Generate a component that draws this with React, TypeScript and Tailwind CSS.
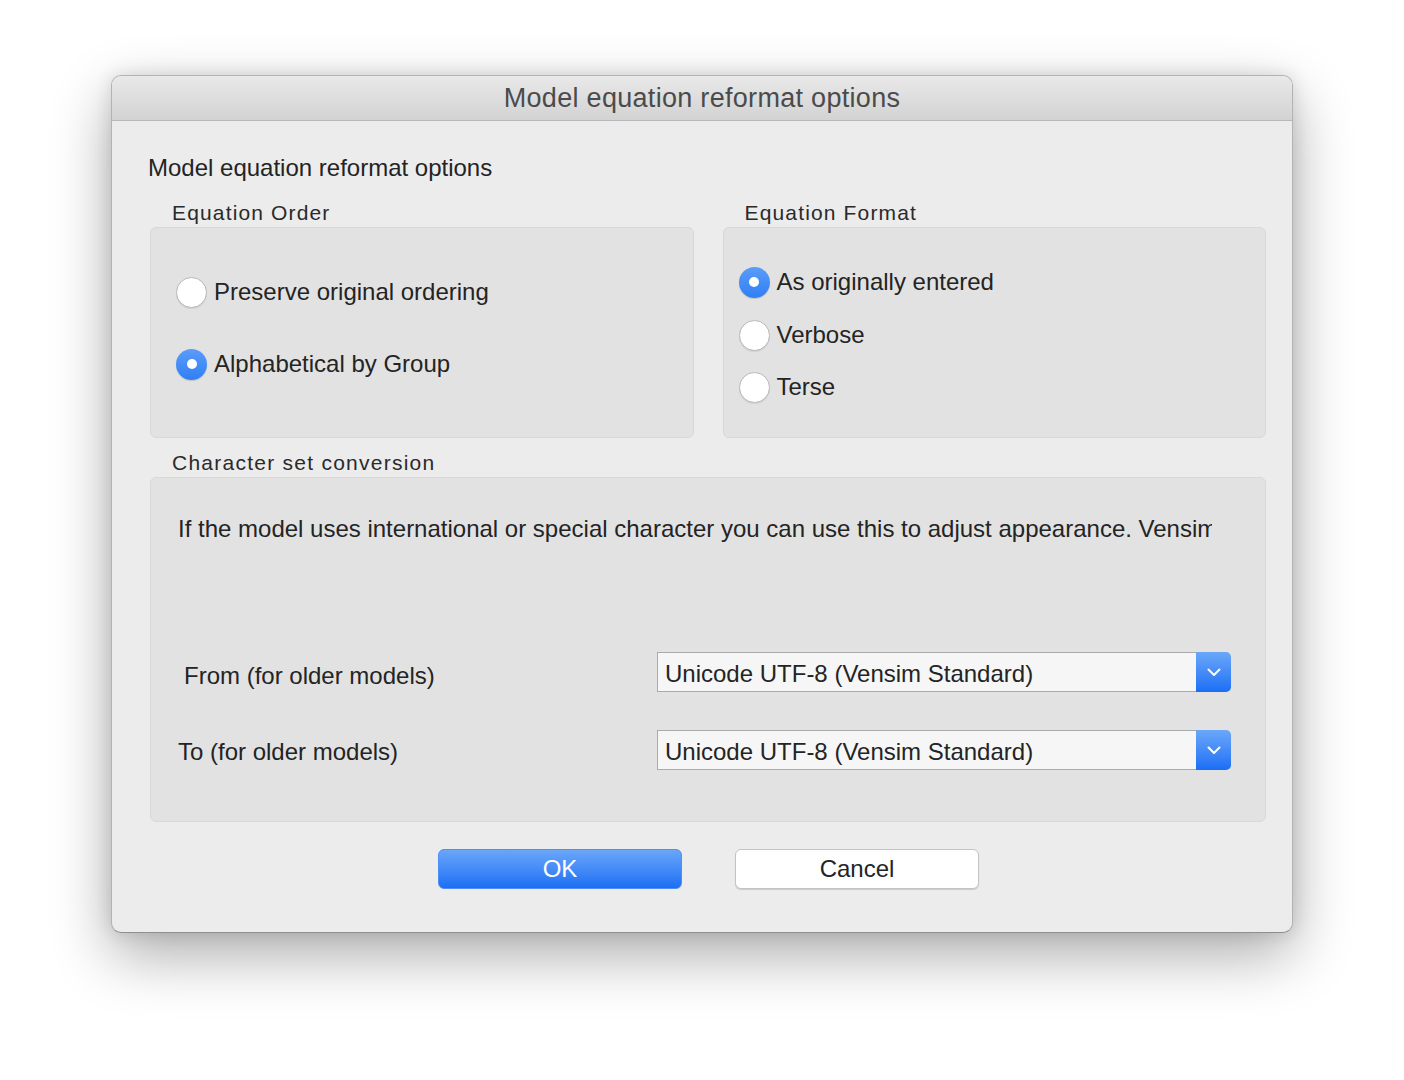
import React from "react";

const font = { fontFamily: '"Liberation Sans", Arial, sans-serif' };

function Radio({ checked, label }: { checked?: boolean; label: string }) {
  return (
    <div className="flex items-center h-[32px]">
      {checked ? (
        <div className="w-[31px] h-[31px] rounded-full bg-gradient-to-b from-[#5a9cf8] to-[#2f7ff5] flex items-center justify-center shadow-[0_1px_1px_rgba(0,0,0,0.15)]">
          <div className="w-[10px] h-[10px] rounded-full bg-white" />
        </div>
      ) : (
        <div className="w-[31px] h-[31px] rounded-full bg-white border border-[#b9b9b9] shadow-[0_1px_1px_rgba(0,0,0,0.08)]" />
      )}
      <span className="ml-[7px] text-[24px] leading-[28px] text-[#242424]">{label}</span>
    </div>
  );
}

function Select({ value }: { value: string }) {
  return (
    <div className="flex h-[40px] w-[574px]">
      <div className="flex-1 flex items-center bg-[#f6f6f6] border border-[#ababab] border-r-0 pl-[7px] pt-[3px] text-[24px] leading-[28px] text-[#242424]">
        {value}
      </div>
      <div className="w-[35px] h-[40px] rounded-r-[5px] bg-gradient-to-b from-[#6ba7f9] to-[#1a6ef5] flex items-center justify-center">
        <svg width="14" height="9" viewBox="0 0 14 9" fill="none">
          <path d="M1.5 1.5 L7 7 L12.5 1.5" stroke="white" strokeWidth="2" strokeLinecap="round" strokeLinejoin="round" />
        </svg>
      </div>
    </div>
  );
}

export default function App() {
  return (
    <div className="min-h-[1080px] bg-white pt-[75px]" style={font}>
      <div className="mx-auto w-[1182px] h-[858px] rounded-[10px] bg-[#ececec] border border-[#b3b3b3] border-b-[#8f8f8f] shadow-[0_22px_60px_rgba(0,0,0,0.33),0_0_18px_rgba(0,0,0,0.12)] overflow-hidden flex flex-col">
        <div className="h-[45px] shrink-0 bg-gradient-to-b from-[#e9e9e9] to-[#d3d3d3] border-b border-[#b8b8b8] flex items-center justify-center text-[27px] tracking-[0.3px] text-[#4b4b4b]">
          Model equation reformat options
        </div>
        <div className="pl-[38px] pr-[26px] flex flex-col">
          <div className="mt-[33px] -ml-[2px] text-[24px] leading-[28px] text-[#242424]">
            Model equation reformat options
          </div>
          <div className="mt-[19px] grid grid-cols-2 gap-[29px]">
            <div>
              <div className="pl-[22px] h-[24px] text-[21px] leading-[24px] tracking-[1.15px] text-[#2a2a2a]">Equation Order</div>
              <div className="mt-[2px] h-[211px] rounded-[6px] bg-[#e2e2e2] border border-[#d8d8d8] pl-[25px] pt-[48px] flex flex-col gap-[40px]">
                <Radio label="Preserve original ordering" />
                <Radio checked label="Alphabetical by Group" />
              </div>
            </div>
            <div>
              <div className="pl-[22px] h-[24px] text-[21px] leading-[24px] tracking-[1.15px] text-[#2a2a2a]">Equation Format</div>
              <div className="mt-[2px] h-[211px] rounded-[6px] bg-[#e2e2e2] border border-[#d8d8d8] pl-[15px] pt-[38px] flex flex-col gap-[21px]">
                <Radio checked label="As originally entered" />
                <Radio label="Verbose" />
                <div className="-mt-[1px]">
                  <Radio label="Terse" />
                </div>
              </div>
            </div>
          </div>
          <div className="mt-[13px] pl-[22px] h-[24px] text-[21px] leading-[24px] tracking-[1.25px] text-[#2a2a2a]">Character set conversion</div>
          <div className="mt-[2px] h-[345px] rounded-[6px] bg-[#e2e2e2] border border-[#d8d8d8] flex flex-col">
            <div className="mt-[37px] ml-[27px] mr-[53px] overflow-hidden whitespace-nowrap text-[24px] leading-[28px] text-[#242424]">
              If the model uses international or special character you can use this to adjust appearance. Vensim uses Unicode UTF-8 as its standard.
            </div>
            <div className="mt-[109px] flex items-center justify-between pr-[34px]">
              <span className="ml-[33px] mt-[8px] text-[24px] leading-[28px] text-[#242424]">From (for older models)</span>
              <Select value="Unicode UTF-8 (Vensim Standard)" />
            </div>
            <div className="mt-[38px] flex items-center justify-between pr-[34px]">
              <span className="ml-[27px] mt-[4px] text-[24px] leading-[28px] text-[#242424]">To (for older models)</span>
              <Select value="Unicode UTF-8 (Vensim Standard)" />
            </div>
          </div>
          <div className="mt-[27px] flex justify-center gap-[53px] pl-[1px]">
            <button className="w-[244px] h-[40px] rounded-[6px] bg-gradient-to-b from-[#6aa6f9] to-[#1a6ef5] text-white text-[24px] border border-[#4f8ff5]">
              OK
            </button>
            <button className="w-[244px] h-[40px] rounded-[6px] bg-white text-[#242424] text-[24px] border border-[#c4c4c4] shadow-[0_1px_1px_rgba(0,0,0,0.15)]">
              Cancel
            </button>
          </div>
        </div>
      </div>
    </div>
  );
}
